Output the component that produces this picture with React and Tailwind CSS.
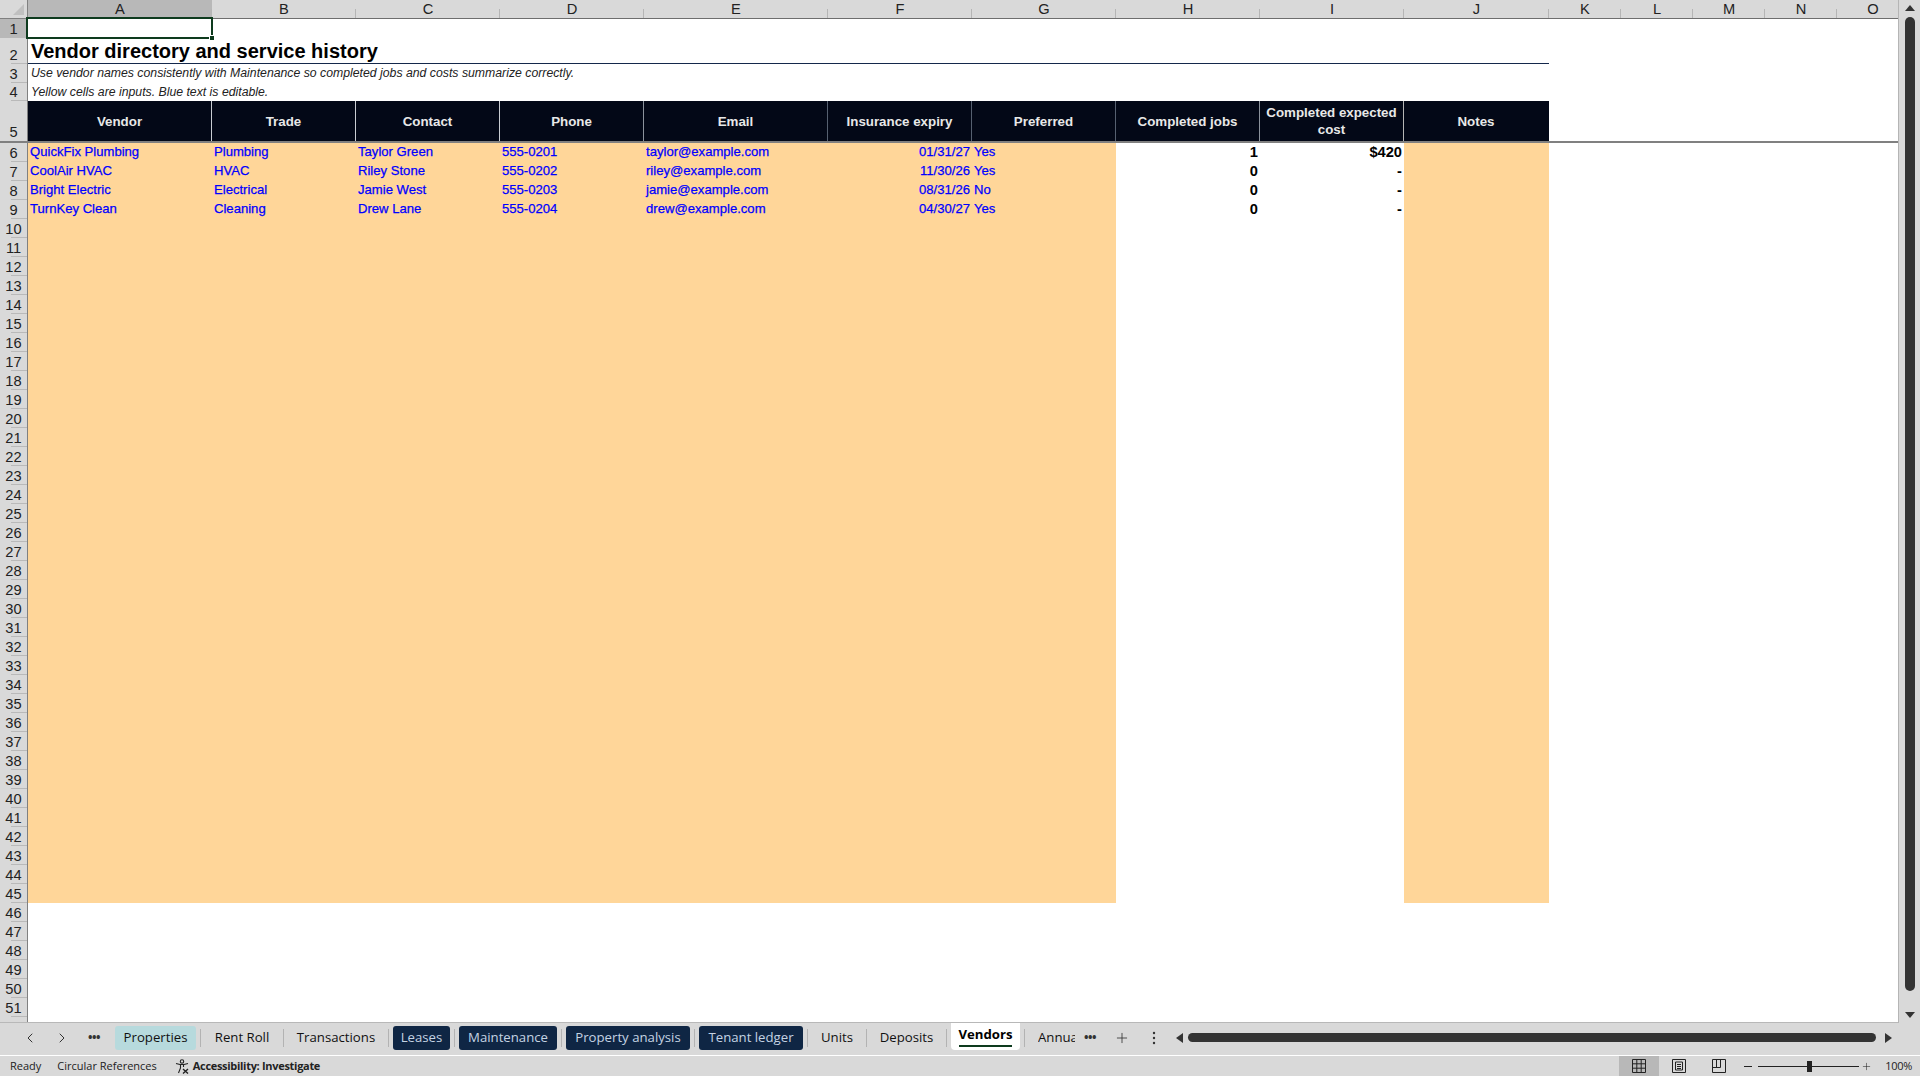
import React from 'react';
import { ChevronLeft, ChevronRight, Plus } from 'lucide-react';

const columns = ['A', 'B', 'C', 'D', 'E', 'F', 'G', 'H', 'I', 'J', 'K', 'L', 'M', 'N', 'O'];
const gridCols = 'grid grid-cols-[184px_144px_144px_144px_184px_144px_144px_144px_144px_145px_72px_72px_72px_72px_72px]';

const headers = [
  ['Vendor', 'border-[#c9ccd2]'],
  ['Trade', 'border-[#c9ccd2]'],
  ['Contact', 'border-[#c9ccd2]'],
  ['Phone', 'border-[#8b929c]'],
  ['Email', 'border-[#566070]'],
  ['Insurance expiry', 'border-[#566070]'],
  ['Preferred', 'border-[#566070]'],
  ['Completed jobs', 'border-[#8b929c]'],
  ['Completed expected cost', 'border-[#b5b5b5]'],
  ['Notes', 'border-transparent'],
];

const vendors = [
  ['QuickFix Plumbing', 'Plumbing', 'Taylor Green', '555-0201', 'taylor@example.com', '01/31/27', 'Yes', '1', '$420'],
  ['CoolAir HVAC', 'HVAC', 'Riley Stone', '555-0202', 'riley@example.com', '11/30/26', 'Yes', '0', '-'],
  ['Bright Electric', 'Electrical', 'Jamie West', '555-0203', 'jamie@example.com', '08/31/26', 'No', '0', '-'],
  ['TurnKey Clean', 'Cleaning', 'Drew Lane', '555-0204', 'drew@example.com', '04/30/27', 'Yes', '0', '-'],
];

const rowNumbers = Array.from({ length: 52 }, (_, i) => i + 1);
const emptyInputRows = Array.from({ length: 36 }, (_, i) => i);
const emptyRows = Array.from({ length: 7 }, (_, i) => i);

const tabs = [
  { name: 'Properties', className: 'w-[81px] bg-[#b7dadd] text-[#111] rounded-[3px]' },
  { name: 'Rent Roll', className: 'w-[74px] text-[#111]', sep: true },
  { name: 'Transactions', className: 'w-[96px] text-[#111]', sep: true },
  { name: 'Leases', className: 'w-[57px] bg-[#0f2644] text-[#c4d3e3] rounded-[3px]', sep: true },
  { name: 'Maintenance', className: 'w-[98px] bg-[#0f2644] text-[#c4d3e3] rounded-[3px]', sep: true },
  { name: 'Property analysis', className: 'w-[124px] bg-[#0f2644] text-[#c4d3e3] rounded-[3px]', sep: true },
  { name: 'Tenant ledger', className: 'w-[104px] bg-[#0f2644] text-[#c4d3e3] rounded-[3px]', sep: true },
  { name: 'Units', className: 'w-[50px] text-[#111]', sep: true },
  { name: 'Deposits', className: 'w-[71px] text-[#111]', sep: true },
];

const Sep = () => <div className="w-px h-[18px] bg-[#b3b3b3] mx-[4px] shrink-0" />;

const ColumnHeader = () => (
  <div className="flex h-[19px] shrink-0 overflow-hidden">
    <div className="w-[28px] h-[19px] shrink-0 bg-[#d9d9d9] border-b border-r border-[#808080] relative">
      <div className="absolute right-[3px] bottom-[3px] w-0 h-0 border-l-[11px] border-l-transparent border-b-[11px] border-b-[#c0c0c0]" />
    </div>
    <div className={gridCols}>
      {columns.map((col, i) => (
        <div
          key={col}
          className={`h-[19px] flex items-center justify-center text-[14.67px] leading-none relative border-b border-[#6e6e6e] text-[#222] ${i === 0 ? 'bg-[#b8b8b8]' : 'bg-[#d9d9d9]'}`}
        >
          {col}
          <div className="absolute right-0 bottom-0 w-px h-[9px] bg-[#b5b5b5]" />
        </div>
      ))}
    </div>
  </div>
);

const rowHeight = (n) => {
  if (n === 2) return 'h-[26px]';
  if (n === 4) return 'h-[18px]';
  if (n === 5) return 'h-[42px] border-b-2 border-[#808080]';
  return 'h-[19px]';
};

const RowHeaders = () => (
  <div className="w-[28px] shrink-0 bg-[#d9d9d9] border-r border-[#808080] overflow-hidden">
    {rowNumbers.map((n) => (
      <div
        key={n}
        className={`${rowHeight(n)} relative flex items-end justify-center text-[14.67px] leading-[18px] text-[#222] ${n === 1 ? 'bg-[#b8b8b8]' : ''}`}
      >
        {n}
        {n !== 5 && <div className="absolute right-0 bottom-0 w-[16px] h-px bg-[#b9b9b9]" />}
      </div>
    ))}
  </div>
);

const InputCells = ({ row }) => (
  <>
    <div className="col-span-7 grid grid-cols-[184px_144px_144px_144px_184px_144px_144px] bg-[#ffd699] text-[#0000ff] text-[13.1px] [-webkit-text-stroke:0.25px_#0000ff]">
      {row && (
        <>
          <div className="pl-[2px] whitespace-nowrap">{row[0]}</div>
          <div className="pl-[2px] whitespace-nowrap">{row[1]}</div>
          <div className="pl-[2px] whitespace-nowrap">{row[2]}</div>
          <div className="pl-[2px] whitespace-nowrap">{row[3]}</div>
          <div className="pl-[2px] whitespace-nowrap">{row[4]}</div>
          <div className="pr-[2px] text-right whitespace-nowrap">{row[5]}</div>
          <div className="pl-[2px] whitespace-nowrap">{row[6]}</div>
        </>
      )}
    </div>
    <div className="pr-[2px] text-right font-bold text-[14.67px] text-black">{row && row[7]}</div>
    <div className="pr-[2px] text-right font-bold text-[14.67px] text-black">{row && row[8]}</div>
    <div className="bg-[#ffd699]" />
  </>
);

const Sheet = () => (
  <div className="flex-1 bg-white overflow-hidden text-[13.33px]">
    <div className={`${gridCols} h-[19px]`} />

    <div className={`${gridCols} h-[26px]`}>
      <div className="col-span-10 border-b border-[#14284b] pl-[3px] pt-px text-[20px] leading-[24px] font-bold text-black whitespace-nowrap">
        Vendor directory and service history
      </div>
    </div>

    <div className={`${gridCols} h-[19px]`}>
      <div className="col-span-10 pl-[3px] text-[12.28px] leading-[18px] italic text-[#222] whitespace-nowrap">
        Use vendor names consistently with Maintenance so completed jobs and costs summarize correctly.
      </div>
    </div>
    <div className={`${gridCols} h-[18px]`}>
      <div className="col-span-10 pl-[3px] text-[12.28px] leading-[18px] italic text-[#222] whitespace-nowrap">
        Yellow cells are inputs. Blue text is editable.
      </div>
    </div>

    <div className="h-[42px] border-b-2 border-[#808080]">
      <div className={`${gridCols} h-[40px]`}>
        {headers.map(([label, border]) => (
          <div
            key={label}
            className={`bg-[#030817] text-[#e8e8e8] font-bold text-[13.33px] leading-[17px] text-center flex items-center justify-center px-[2px] border-r ${border}`}
          >
            {label}
          </div>
        ))}
      </div>
    </div>

    {vendors.map((row) => (
      <div key={row[0]} className={`${gridCols} h-[19px] leading-[18px]`}>
        <InputCells row={row} />
      </div>
    ))}
    {emptyInputRows.map((i) => (
      <div key={i} className={`${gridCols} h-[19px]`}>
        <InputCells />
      </div>
    ))}
    {emptyRows.map((i) => (
      <div key={i} className="h-[19px]" />
    ))}
  </div>
);

const VerticalScroll = () => (
  <div className="flex-1 flex flex-col items-center border-l border-[#b5b5b5] pt-[5px] pb-[5px]">
    <svg width="10" height="6" viewBox="0 0 10 6"><path d="M5 0 L10 6 L0 6 Z" fill="#333" /></svg>
    <div className="w-[10px] h-[974px] mt-[6px] rounded-[5px] bg-[#333]" />
    <div className="flex-1" />
    <svg width="10" height="6" viewBox="0 0 10 6"><path d="M0 0 L10 0 L5 6 Z" fill="#333" /></svg>
  </div>
);

const TabBar = () => (
  <div className="h-[32px] shrink-0 flex items-start bg-[#d9d9d9] font-['Open_Sans',sans-serif] text-[13.2px]">
    <div className="w-[115px] h-[29px] flex items-center text-[#333] shrink-0">
      <ChevronLeft size={16} strokeWidth={1.5} className="ml-[22px]" />
      <ChevronRight size={16} strokeWidth={1.5} className="ml-[16px]" />
      <span className="ml-[18px] font-bold text-[12px] leading-none tracking-[-0.5px]">•••</span>
    </div>
    <div className="flex items-center h-[24px] mt-[3px] shrink-0">
      {tabs.map((tab) => (
        <React.Fragment key={tab.name}>
          {tab.sep && <Sep />}
          <div className={`h-[24px] flex items-center justify-center whitespace-nowrap shrink-0 ${tab.className}`}>{tab.name}</div>
        </React.Fragment>
      ))}
      <Sep />
    </div>
    <div className="w-[69px] h-[27px] bg-white rounded-b-[4px] flex flex-col items-center shrink-0 font-bold text-black">
      <span className="mt-[2px] leading-[18px]">Vendors</span>
      <div className="w-[53px] h-[2px] bg-[#0e3b1e] mt-[2px]" />
    </div>
    <div className="mt-[3px] flex items-center h-[24px] shrink-0">
      <Sep />
      <div className="w-[37px] ml-[9px] overflow-hidden whitespace-nowrap text-[#111]">Annual summary</div>
    </div>
    <div className="w-[100px] h-[29px] flex items-center text-[#333] shrink-0">
      <span className="ml-[9px] font-bold text-[12px] leading-none tracking-[-0.5px]">•••</span>
      <Plus size={16} strokeWidth={1.25} className="ml-[18px]" />
      <svg width="4" height="14" viewBox="0 0 4 14" className="ml-[22px]">
        <circle cx="2" cy="2" r="1.2" fill="#333" /><circle cx="2" cy="7" r="1.2" fill="#333" /><circle cx="2" cy="12" r="1.2" fill="#333" />
      </svg>
    </div>
    <div className="flex-1 h-[29px] flex items-center pr-[28px]">
      <svg width="7" height="10" viewBox="0 0 7 10" className="ml-px"><path d="M7 0 V10 L0 5 Z" fill="#333" /></svg>
      <div className="flex-1 h-[9px] ml-[5px] rounded-[5px] bg-[#333]" />
      <svg width="7" height="10" viewBox="0 0 7 10" className="ml-[9px]"><path d="M0 0 V10 L7 5 Z" fill="#333" /></svg>
    </div>
  </div>
);

const AccessibilityIcon = () => (
  <svg width="15" height="15" viewBox="0 0 15 15" fill="none" stroke="#222" strokeWidth="1.1" className="ml-[18px]">
    <circle cx="7" cy="2.5" r="1.7" />
    <path d="M1 4.5 L5 5.5 H9 L13 4.5 M5.5 5.5 V9 L3.5 14 M8.5 5.5 V8" />
    <path d="M8 10 L13 14.5 M13 10 L8 14.5" strokeWidth="1.4" />
  </svg>
);

const StatusBar = () => (
  <div className="h-[21px] shrink-0 flex items-center bg-[#d9d9d9] border-t border-white font-['Open_Sans',sans-serif] text-[11px] text-[#222]">
    <span className="ml-[10px]">Ready</span>
    <span className="ml-[16px]">Circular References</span>
    <AccessibilityIcon />
    <span className="ml-[3px] font-bold tracking-[-0.3px]">Accessibility: Investigate</span>
    <div className="flex-1" />
    <div className="w-[40px] h-[20px] bg-[#b8b8b8] flex items-center justify-center">
      <svg width="14" height="14" viewBox="0 0 14 14" fill="none" stroke="#222">
        <path d="M.5 .5 H13.5 V13.5 H.5 Z M.5 4.8 H13.5 M.5 9.2 H13.5 M4.8 .5 V13.5 M9.2 .5 V13.5" />
      </svg>
    </div>
    <div className="w-[40px] flex justify-center">
      <svg width="14" height="14" viewBox="0 0 14 14" fill="none" stroke="#222">
        <path d="M.5 .5 H13.5 V13.5 H.5 Z M3.5 3 H10.5 V11 H3.5 Z M5 5.5 H9 M5 7.5 H9 M5 9.5 H9" />
      </svg>
    </div>
    <div className="w-[40px] flex justify-center">
      <svg width="14" height="14" viewBox="0 0 14 14" fill="none" stroke="#222">
        <path d="M.5 .5 H13.5 V13.5 H.5 Z M.5 8.5 H8.5 V.5 M4.5 .5 V8.5" />
      </svg>
    </div>
    <span className="ml-[5px] w-[8px] h-px bg-[#222]" />
    <div className="relative w-[101px] h-px bg-[#222] ml-[6px]">
      <div className="absolute left-[49px] top-[-5px] w-[5px] h-[11px] bg-[#222]" />
    </div>
    <Plus size={11} strokeWidth={1.2} className="ml-[2px]" />
    <span className="ml-[13px] mr-[8px] tracking-[-0.3px]">100%</span>
  </div>
);

export default function App() {
  return (
    <div className="w-[1920px] h-[1076px] flex flex-col overflow-hidden bg-[#d9d9d9] font-['Liberation_Sans',sans-serif]">
      <div className="h-[1023px] shrink-0 flex overflow-hidden">
        <div className="relative w-[1898px] shrink-0 flex flex-col border-b border-[#b8b8b8]">
          <ColumnHeader />
          <div className="flex-1 flex overflow-hidden">
            <RowHeaders />
            <Sheet />
          </div>
          {/* selected cell */}
          <div className="absolute left-[26px] top-[17px] w-[187px] h-[22px] border-2 border-[#0e3b1e]">
            <div className="absolute right-[-4px] bottom-[-4px] w-[6px] h-[6px] bg-[#0e3b1e] border border-white" />
          </div>
        </div>
        <VerticalScroll />
      </div>
      <TabBar />
      <StatusBar />
    </div>
  );
}
